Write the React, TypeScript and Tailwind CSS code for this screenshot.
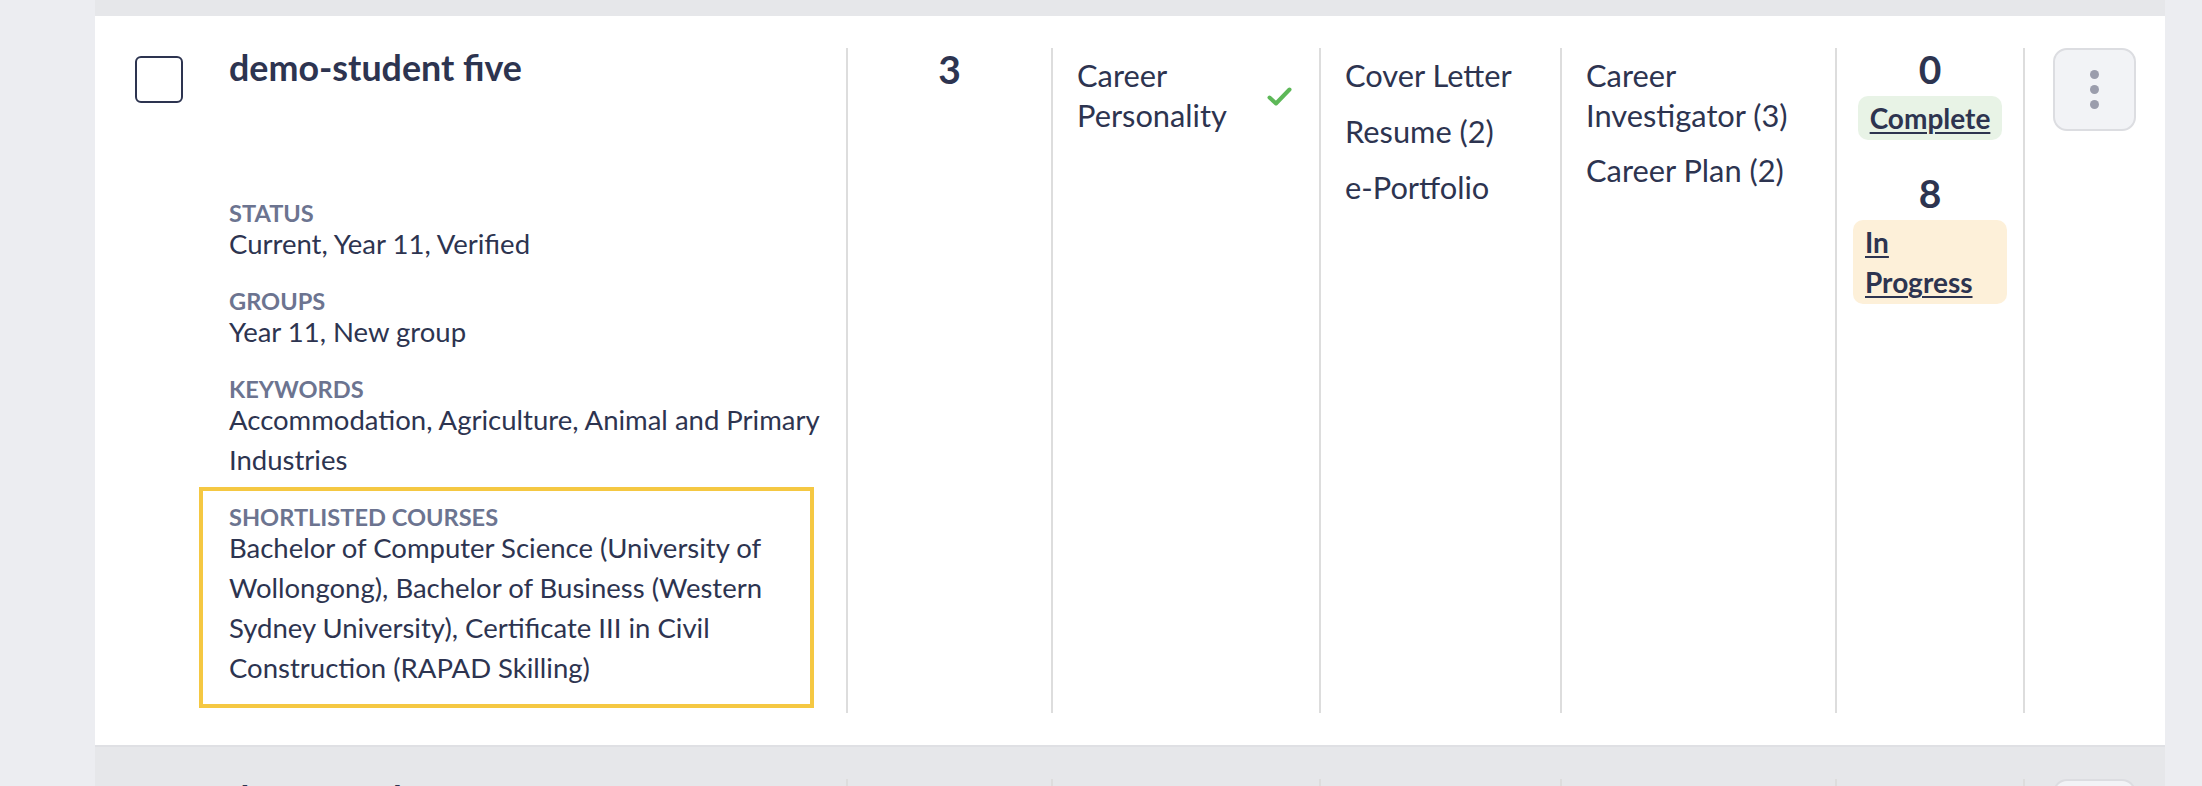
import React from 'react';

type Student = {
  name: string;
  status: string;
  groups: string;
  keywords: string;
  courses: string;
  activities: number;
  personality: string;
  documents: string[];
  plans: string[];
  complete: number;
  inProgress: number;
};

const students: Student[] = [
  {
    name: 'demo-student five',
    status: 'Current, Year 11, Verified',
    groups: 'Year 11, New group',
    keywords: 'Accommodation, Agriculture, Animal and Primary Industries',
    courses:
      'Bachelor of Computer Science (University of Wollongong), Bachelor of Business (Western Sydney University), Certificate III in Civil Construction (RAPAD Skilling)',
    activities: 3,
    personality: 'Career Personality',
    documents: ['Cover Letter', 'Resume (2)', 'e-Portfolio'],
    plans: ['Career Investigator (3)', 'Career Plan (2)'],
    complete: 0,
    inProgress: 8,
  },
  {
    name: 'demo-student four',
    status: 'Current, Year 10, Verified',
    groups: 'Year 10',
    keywords: 'Arts, Business',
    courses: 'Bachelor of Arts (University of Sydney)',
    activities: 2,
    personality: 'Career Personality',
    documents: ['Resume'],
    plans: ['Career Plan'],
    complete: 1,
    inProgress: 4,
  },
];

const Field = ({ label, value, last }: { label: string; value: string; last?: boolean }) => (
  <div className={last ? '' : 'mb-[26px]'}>
    <div className="text-[23.6px] leading-[22px] font-bold text-[#6c7490]">{label}</div>
    <div className="text-[27.5px] leading-[40px]">{value}</div>
  </div>
);

const Check = () => (
  <svg width="25" height="19" viewBox="0 0 25 19" fill="none">
    <path d="M2.5 10.5 L9 16.5 L22.5 2.5" stroke="#5db858" strokeWidth="4" strokeLinecap="round" strokeLinejoin="round" />
  </svg>
);

const StudentRow = ({ s, shaded }: { s: Student; shaded?: boolean }) => (
  <div className={`flex py-8 border-b-2 border-[#dfe0e4] ${shaded ? 'bg-[#e6e7ea]' : 'bg-white'}`}>
    {/* name + details */}
    <div className="w-[751px] shrink-0 flex pl-10">
      <div className="pt-2">
        <div className="w-12 h-[47px] border-2 border-[#2d3450] rounded-md bg-white" />
      </div>
      <div className="ml-[46px] w-[607px] pb-[5px]">
        <div className="text-[35.8px] leading-[40px] font-bold mb-[114px]">{s.name}</div>
        <Field label="STATUS" value={s.status} />
        <Field label="GROUPS" value={s.groups} />
        <Field label="KEYWORDS" value={s.keywords} last />
        <div className="mt-[7px] -ml-[30px] w-[615px] border-4 border-[#f5c842] pt-[15px] pb-4 px-[26px]">
          <div className="text-[23.6px] leading-[22px] font-bold text-[#6c7490]">SHORTLISTED COURSES</div>
          <div className="text-[27.5px] leading-[40px]">{s.courses}</div>
        </div>
      </div>
    </div>

    {/* activity count */}
    <div className="w-[205px] shrink-0 border-l-2 border-[#dddddd] text-center pt-[1px]">
      <div className="text-[39px] leading-[40px] font-bold">{s.activities}</div>
    </div>

    {/* personality */}
    <div className="w-[268px] shrink-0 border-l-2 border-[#dddddd] pl-6 pr-[27px] pt-2">
      <div className="flex items-center justify-between">
        <div className="text-[30.8px] leading-[40px] w-[170px]">{s.personality}</div>
        <Check />
      </div>
    </div>

    {/* documents */}
    <div className="w-[241px] shrink-0 border-l-2 border-[#dddddd] pl-6 pr-3 pt-2 flex flex-col gap-4">
      {s.documents.map((d) => (
        <div key={d} className="text-[30.8px] leading-[40px]">{d}</div>
      ))}
    </div>

    {/* plans */}
    <div className="w-[275px] shrink-0 border-l-2 border-[#dddddd] pl-6 pr-3 pt-2 flex flex-col gap-[15px]">
      {s.plans.map((p) => (
        <div key={p} className="text-[30.8px] leading-[40px]">{p}</div>
      ))}
    </div>

    {/* progress */}
    <div className="w-[188px] shrink-0 border-l-2 border-[#dddddd] px-4 text-center pt-[1px]">
      <div className="text-[39px] leading-[40px] font-bold mb-[7px]">{s.complete}</div>
      <a href="#" className="inline-block text-left bg-[#e8f3e6] rounded-[10px] px-3 py-[2px] text-[28px] leading-[40px] font-bold underline decoration-2 underline-offset-[3px]">
        Complete
      </a>
      <div className="text-[39px] leading-[40px] font-bold mt-[33px] mb-[7px]">{s.inProgress}</div>
      <a href="#" className="inline-block text-left bg-[#fdf0d9] rounded-[10px] px-3 py-[2px] text-[28px] leading-[40px] font-bold underline decoration-2 underline-offset-[3px]">
        In Progress
      </a>
    </div>

    {/* actions */}
    <div className="w-[142px] shrink-0 border-l-2 border-[#dddddd] pl-7">
      <button className="w-[83px] h-[83px] rounded-[14px] border-2 border-[#dcdde1] bg-[#f2f3f6] flex flex-col items-center justify-center gap-[6px]">
        <span className="w-[9px] h-[9px] rounded-full bg-[#9b9dac]" />
        <span className="w-[9px] h-[9px] rounded-full bg-[#9b9dac]" />
        <span className="w-[9px] h-[9px] rounded-full bg-[#9b9dac]" />
      </button>
    </div>
  </div>
);

export default function App() {
  return (
    <div className="h-[786px] overflow-hidden bg-[#ecedf1] font-['Lato',sans-serif] text-[#2d3450]">
      <div className="ml-[95px] w-[2070px]">
        <div className="h-4 bg-[#e6e7ea]" />
        <StudentRow s={students[0]} />
        <StudentRow s={students[1]} shaded />
      </div>
    </div>
  );
}
